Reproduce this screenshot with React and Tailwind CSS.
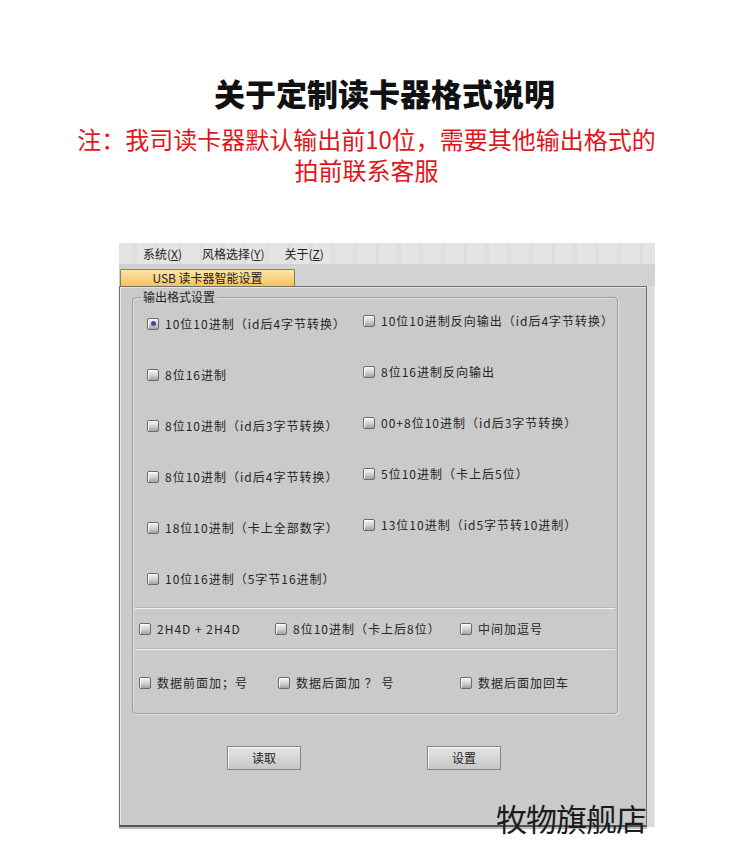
import React from "react";

function Box({ checked }) {
  return (
    <span className="relative inline-flex w-[12px] h-[12px] shrink-0 items-center justify-center border border-[#6a6a6a] rounded-[2px] bg-gradient-to-b from-[#f6f6f6] via-[#d4d4d4] to-[#a2a2a2] shadow-[inset_1px_1px_0_#ffffff]">
      {checked && <span className="w-[5px] h-[5px] rounded-full bg-[#3a4aa6]" />}
    </span>
  );
}

function Opt({ label, checked, gap = "gap-[6px]", className = "" }) {
  return (
    <div className={`flex items-center ${gap} ${className}`}>
      <Box checked={checked} />
      <span className="text-[12px] leading-[14px] text-[#262626] tracking-[1px] whitespace-nowrap">{label}</span>
    </div>
  );
}

export default function App() {
  const col1 = [
    ["10位10进制（id后4字节转换）", true],
    ["8位16进制"],
    ["8位10进制（id后3字节转换）"],
    ["8位10进制（id后4字节转换）"],
    ["18位10进制（卡上全部数字）"],
    ["10位16进制（5字节16进制）"],
  ];
  const col2 = [
    "10位10进制反向输出（id后4字节转换）",
    "8位16进制反向输出",
    "00+8位10进制（id后3字节转换）",
    "5位10进制（卡上后5位）",
    "13位10进制（id5字节转10进制）",
    null,
  ];
  return (
    <div className="relative w-[750px] h-[845px] bg-white font-['Noto_Sans_CJK_SC','Noto_Sans',sans-serif] overflow-hidden">
      <div className="pt-[77px] pl-[19px] text-center text-[31px] leading-[31px] font-black text-[#111111]">
        关于定制读卡器格式说明
      </div>
      <div className="mt-[15px] pr-[17px] text-center text-[24px] leading-[31px] text-[#e3151c]">
        <div>注：我司读卡器默认输出前10位，需要其他输出格式的</div>
        <div>拍前联系客服</div>
      </div>

      <div className="mt-[58px] ml-[119px] w-[536px] bg-[#d7d7d7]">
        <div className="h-[22px] flex items-center pl-[24px] gap-[20px] text-[12px] text-[#222222] bg-[repeating-linear-gradient(90deg,#e4e4e4_0px,#e4e4e4_14px,#dcdcdc_15px,#e8e8e8_22px)] border-b border-[#d0d0d0]">
          <span>系统(<span className="underline">X</span>)</span>
          <span>风格选择(<span className="underline">Y</span>)</span>
          <span>关于(<span className="underline">Z</span>)</span>
        </div>
        <div className="h-[21px] flex items-end pl-[1px] bg-[#d2d2d2]">
          <div className="w-[175px] h-[17px] flex items-center justify-center text-[12px] text-[#222222] bg-gradient-to-b from-[#ffe6a8] to-[#f5c25c] border border-b-0 border-[#8f7d52] rounded-t-[2px]">
            USB 读卡器智能设置
          </div>
        </div>
        <div className="flex">
          <div className="w-[528px] h-[541px] bg-[#cacaca] border border-[#6f6f6f] border-b-[2px] border-b-[#555555] shadow-[inset_1px_1px_0_#e6e6e6,0_2px_1px_#bdbdbd] pt-[10px] pl-[12px]">
            <div className="relative w-[486px] h-[417px] border border-[#9a9a9a] rounded-[4px] shadow-[inset_1px_1px_0_#e2e2e2,1px_1px_0_#e2e2e2] flex flex-col">
              <span className="absolute left-[8px] -top-[8px] px-[2px] bg-[#cacaca] text-[12px] leading-[14px] text-[#262626]">输出格式设置</span>
              <div className="grid grid-cols-[216px_1fr] pl-[14px]">
                {col1.map((c, i) => (
                  <React.Fragment key={i}>
                    <div className="h-[51px] flex items-center">
                      <Opt label={c[0]} checked={c[1]} />
                    </div>
                    <div className="h-[51px] flex items-center pb-[6px]">
                      {col2[i] && <Opt label={col2[i]} />}
                    </div>
                  </React.Fragment>
                ))}
              </div>
              <div className="mx-[2px] mt-[3px] h-[2px] bg-[#f2f2f2] border-t border-[#b4b4b4]" />
              <div className="h-[39px] flex items-center pl-[6px]">
                <Opt label="2H4D + 2H4D" className="w-[136px]" />
                <Opt label="8位10进制（卡上后8位）" className="w-[185px]" />
                <Opt label="中间加逗号" />
              </div>
              <div className="mx-[2px] h-[2px] bg-[#f2f2f2] border-t border-[#b4b4b4]" />
              <div className="flex-1 flex items-center pl-[6px] pt-[2px]">
                <Opt label="数据前面加；号" className="w-[139px]" />
                <Opt label="数据后面加 ？ 号" className="w-[182px]" />
                <Opt label="数据后面加回车" />
              </div>
            </div>
            <div className="mt-[32px] pl-[95px] flex gap-[126px]">
              <button className="w-[74px] h-[24px] text-[12px] text-[#222222] border border-[#858585] bg-gradient-to-b from-[#e6e6e6] to-[#c6c6c6] shadow-[inset_1px_1px_0_#f8f8f8]">读取</button>
              <button className="w-[74px] h-[24px] text-[12px] text-[#222222] border border-[#858585] bg-gradient-to-b from-[#e6e6e6] to-[#c6c6c6] shadow-[inset_1px_1px_0_#f8f8f8]">设置</button>
            </div>
          </div>
          <div className="flex-1 bg-[#d9d9d9] border-r border-[#eeeeee]" />
        </div>
      </div>

      <div className="absolute left-[496px] top-[799px] text-[31px] leading-[38px] text-[#1c1c1c] tracking-[-1px]">
        牧物旗舰店
      </div>
    </div>
  );
}
